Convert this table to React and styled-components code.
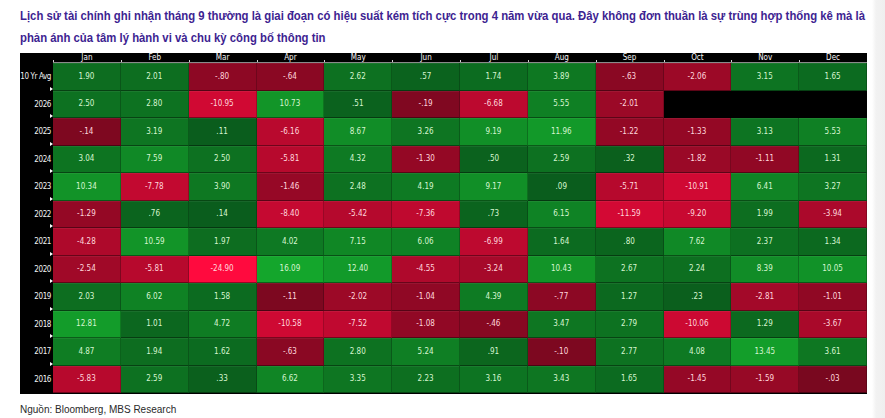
import React from "react";
import styled, { createGlobalStyle } from "styled-components";

const Global = createGlobalStyle`
  html, body { margin: 0; padding: 0; }
  body {
    background: linear-gradient(to right, #ffffff 0, #ffffff 872px, #f2f2f2 876px, #efefef 100%);
    width: 885px;
    height: 418px;
    overflow: hidden;
  }
`;

const Page = styled.div`
  width: 885px;
  height: 418px;
  display: flex;
  flex-direction: column;
`;

const Title = styled.div`
  padding: 5px 0 0 20px;
  font-family: "Liberation Sans", Arial, sans-serif;
  font-weight: 700;
  font-size: 13px;
  line-height: 22px;
  color: #3d2391;
`;

const TitleLine = styled.div`
  white-space: nowrap;
  width: max-content;
  transform: scaleX(0.872);
  transform-origin: left center;
`;

const Chart = styled.div`
  margin: 4px 0 0 20px;
  width: 847px;
  display: grid;
  grid-template-columns: 33px repeat(12, 1fr);
  grid-template-rows: 10px repeat(12, 27.5px);
  background: #000;
  padding-bottom: 1px;
  font-family: "DejaVu Sans Condensed", "Liberation Sans", sans-serif;
`;

const Corner = styled.div`
  border-bottom: 1px solid #000;
`;

const Month = styled.div`
  position: relative;
  color: #f4f4f4;
  font-size: 8px;
  line-height: 9px;
  text-align: center;
  border-bottom: 1px solid #8a8a8a;
  &::before {
    content: "";
    position: absolute;
    left: 0;
    bottom: 0;
    width: 1px;
    height: 2px;
    background: #cfcfcf;
  }
`;

const RowLabel = styled.div`
  position: relative;
  color: #f2f2f2;
  font-size: 8px;
  letter-spacing: -0.4px;
  display: flex;
  align-items: center;
  justify-content: flex-end;
  padding-right: 2px;
  white-space: nowrap;
  &::after {
    content: "";
    display: ${(p) => (p.$tick ? "block" : "none")};
    position: absolute;
    right: 0;
    bottom: 0;
    width: 0;
    height: 0;
    border-top: 2px solid transparent;
    border-bottom: 2px solid transparent;
    border-left: 3px solid #ffffff;
  }
`;

const Cell = styled.div`
  display: flex;
  align-items: center;
  justify-content: center;
  font-size: 8px;
  background: ${(p) => p.$bg};
  color: ${(p) => p.$fg};
  border-right: 1px solid rgba(0, 0, 0, 0.22);
  border-bottom: 1px solid rgba(0, 0, 0, 0.4);
  box-shadow: inset 0 1px 0 rgba(255, 255, 255, 0.06);
`;

const Empty = styled.div`
  background: #000;
`;

const Footer = styled.div`
  margin: 10px 0 0 20px;
  font-family: "Liberation Sans", Arial, sans-serif;
  font-size: 10px;
  line-height: 12px;
  color: #2a2a2a;
`;

const months = ["Jan", "Feb", "Mar", "Apr", "May", "Jun", "Jul", "Aug", "Sep", "Oct", "Nov", "Dec"];

const rows = [
  ["10 Yr Avg", ["1.90", "2.01", "-.80", "-.64", "2.62", ".57", "1.74", "3.89", "-.63", "-2.06", "3.15", "1.65"]],
  ["2026", ["2.50", "2.80", "-10.95", "10.73", ".51", "-.19", "-6.68", "5.55", "-2.01", null, null, null]],
  ["2025", ["-.14", "3.19", ".11", "-6.16", "8.67", "3.26", "9.19", "11.96", "-1.22", "-1.33", "3.13", "5.53"]],
  ["2024", ["3.04", "7.59", "2.50", "-5.81", "4.32", "-1.30", ".50", "2.59", ".32", "-1.82", "-1.11", "1.31"]],
  ["2023", ["10.34", "-7.78", "3.90", "-1.46", "2.48", "4.19", "9.17", ".09", "-5.71", "-10.91", "6.41", "3.27"]],
  ["2022", ["-1.29", ".76", ".14", "-8.40", "-5.42", "-7.36", ".73", "6.15", "-11.59", "-9.20", "1.99", "-3.94"]],
  ["2021", ["-4.28", "10.59", "1.97", "4.02", "7.15", "6.06", "-6.99", "1.64", ".80", "7.62", "2.37", "1.34"]],
  ["2020", ["-2.54", "-5.81", "-24.90", "16.09", "12.40", "-4.55", "-3.24", "10.43", "2.67", "2.24", "8.39", "10.05"]],
  ["2019", ["2.03", "6.02", "1.58", "-.11", "-2.02", "-1.04", "4.39", "-.77", "1.27", ".23", "-2.81", "-1.01"]],
  ["2018", ["12.81", "1.01", "4.72", "-10.58", "-7.52", "-1.08", "-.46", "3.47", "2.79", "-10.06", "1.29", "-3.67"]],
  ["2017", ["4.87", "1.94", "1.62", "-.63", "2.80", "5.24", ".91", "-.10", "2.77", "4.08", "13.45", "3.61"]],
  ["2016", ["-5.83", "2.59", ".33", "6.62", "3.35", "2.23", "3.16", "3.43", "1.65", "-1.45", "-1.59", "-.03"]],
];

const lerp = (a, b, t) => Math.round(a + (b - a) * t);
const mix = (c1, c2, t) => `rgb(${lerp(c1[0], c2[0], t)}, ${lerp(c1[1], c2[1], t)}, ${lerp(c1[2], c2[2], t)})`;

function colorsFor(str) {
  const v = parseFloat(str);
  if (v < 0) {
    const t = Math.min(Math.abs(v) / 25, 1) ** 0.5;
    return { bg: mix([116, 8, 30], [255, 10, 62], t), fg: "#ffd6dc" };
  }
  const t = Math.min(v / 16, 1) ** 0.65;
  return { bg: mix([10, 90, 28], [20, 166, 44], t), fg: "#d6f5cf" };
}

export default function App() {
  return (
    <Page>
      <Global />
      <Title>
        <TitleLine>
          Lịch sử tài chính ghi nhận tháng 9 thường là giai đoạn có hiệu suất kém tích cực trong 4 năm vừa qua. Đây không đơn thuần là sự trùng hợp thống kê mà là
        </TitleLine>
        <TitleLine>phản ánh của tâm lý hành vi và chu kỳ công bố thông tin</TitleLine>
      </Title>
      <Chart>
        <Corner />
        {months.map((m) => (
          <Month key={m}>{m}</Month>
        ))}
        {rows.map(([label, vals], ri) => (
          <React.Fragment key={label}>
            <RowLabel $tick={ri < rows.length - 1}>{label}</RowLabel>
            {vals.map((v, ci) => {
              if (v === null) return <Empty key={ci} />;
              const c = colorsFor(v);
              return (
                <Cell key={ci} $bg={c.bg} $fg={c.fg}>
                  {v}
                </Cell>
              );
            })}
          </React.Fragment>
        ))}
      </Chart>
      <Footer>Nguồn: Bloomberg, MBS Research</Footer>
    </Page>
  );
}
